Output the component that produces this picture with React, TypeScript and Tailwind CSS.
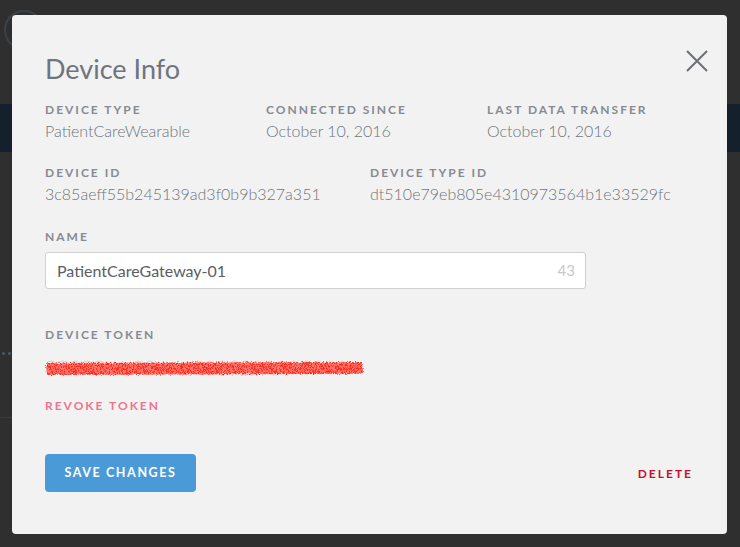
import React from 'react';

const Label: React.FC<{ children: React.ReactNode; className?: string }> = ({ children, className }) => (
  <div className={`text-[12px] font-bold tracking-[2px] leading-4 text-[#868b93] uppercase ${className ?? ''}`}>{children}</div>
);

const Field: React.FC<{ label: string; value: string }> = ({ label, value }) => (
  <div>
    <Label>{label}</Label>
    <div className="mt-[3px] text-[16px] font-light leading-5 text-[#6f747c]">{value}</div>
  </div>
);

// redacted token, hand-scribbled in red
const Scribble = () => (
  <svg width="320" height="22" viewBox="0 0 320 22">
    <defs>
      <filter id="rough" x="-5%" y="-50%" width="110%" height="200%">
        <feTurbulence type="fractalNoise" baseFrequency="0.8" numOctaves="2" seed="5" result="n" />
        <feDisplacementMap in="SourceGraphic" in2="n" scale="4" xChannelSelector="R" yChannelSelector="G" />
      </filter>
      <filter id="speck">
        <feTurbulence type="fractalNoise" baseFrequency="1.4" numOctaves="1" seed="9" />
        <feColorMatrix values="0 0 0 0 1  0 0 0 0 1  0 0 0 0 1  0 0 0 -9 5.2" />
      </filter>
      <clipPath id="band">
        <path d="M1 6 L318 5 L318 19 L2 20 Z" />
      </clipPath>
    </defs>
    <path d="M3 6 q3 -2 6 0 t6 0 t6 0 t6 0 t6 0 t6 0 t6 0 t6 0 t6 0 t6 0 M90 6 q3 -2 6 0 t6 0 t6 0 t6 0 M150 6 q3 -2 6 0 t6 0 t6 0 t6 0 t6 0 t6 0 t6 0 t6 0 t6 0 t6 0 t6 0 t6 0 t6 0 t6 0 t6 0 t6 0 t6 0 t6 0 t6 0 t6 0 t6 0 t6 0 t6 0 t6 0 t6 0 t6 0" stroke="#bdb6b4" strokeWidth="1" fill="none" opacity="0.6" />
    <g filter="url(#rough)">
      <path d="M1 7 L317 6 L318 18 L2 19 Z" fill="#ff2b1c" />
    </g>
    <rect x="0" y="0" width="320" height="22" filter="url(#speck)" clipPath="url(#band)" opacity="0.35" />
  </svg>
);

export default function App() {
  return (
    <div className="relative h-[547px] w-[740px] overflow-hidden bg-[#2f2f2f]" style={{ fontFamily: 'Lato, "Open Sans", sans-serif' }}>
      {/* page behind the overlay */}
      <div className="h-[104px] pl-[4px] pt-[10px]">
        <div className="h-[40px] w-[40px] rounded-full border-2 border-[#3b4248]" />
      </div>
      <div className="h-[48px] bg-[#14202b]" />
      <div className="mt-[200px] flex gap-[3px] pl-[2px]">
        <span className="h-[3px] w-[3px] rounded-full bg-[#4a5a68]" />
        <span className="h-[3px] w-[3px] rounded-full bg-[#4a5a68]" />
        <span className="h-[3px] w-[3px] rounded-full bg-[#4a5a68]" />
      </div>
      <div className="mt-[62px] h-px w-[12px] bg-[#3a3a3a]" />

      {/* modal */}
      <div className="absolute left-[12px] top-[15px] h-[519px] w-[715px] rounded-[4px] bg-[#f2f2f2] px-[33px] pt-[38px]">
        <button className="absolute right-[19px] top-[35px] text-[#6c7075]">
          <svg width="22" height="22" viewBox="0 0 22 22" fill="none" stroke="currentColor" strokeWidth="2">
            <path d="M1 1 L21 21 M21 1 L1 21" />
          </svg>
        </button>
        <h1 className="text-[27px] font-normal leading-8 text-[#6e7580]">Device Info</h1>

        <div className="mt-[17px] grid grid-cols-[221px_221px_1fr]">
          <Field label="Device Type" value="PatientCareWearable" />
          <Field label="Connected Since" value="October 10, 2016" />
          <Field label="Last Data Transfer" value="October 10, 2016" />
        </div>

        <div className="mt-[24px] grid grid-cols-[325px_1fr]">
          <Field label="Device ID" value="3c85aeff55b245139ad3f0b9b327a351" />
          <Field label="Device Type ID" value="dt510e79eb805e4310973564b1e33529fc" />
        </div>

        <Label className="mt-[25px]">Name</Label>
        <div className="mt-[7px] flex h-[37px] w-[541px] items-center justify-between rounded-[3px] border border-[#d0d0d0] bg-white pl-[11px] pr-[10px]">
          <span className="text-[16px] text-[#5a5e63]">PatientCareGateway-01</span>
          <span className="text-[15px] text-[#c8c8c8]">43</span>
        </div>

        <Label className="mt-[38px]">Device Token</Label>
        <div className="mt-[13px]">
          <Scribble />
        </div>

        <button className="mt-[20px] block text-[12px] font-bold tracking-[2px] leading-4 text-[#ec7590]">REVOKE TOKEN</button>

        <div className="mt-[40px] flex items-center justify-between">
          <button className="h-[38px] w-[151px] rounded-[4px] bg-[#4b9ad8] text-[12.5px] font-bold tracking-[1.6px] text-white">SAVE CHANGES</button>
          <button className="mr-[1px] mt-[2px] text-[12px] font-bold tracking-[2px] text-[#c8102e]">DELETE</button>
        </div>
      </div>
    </div>
  );
}
